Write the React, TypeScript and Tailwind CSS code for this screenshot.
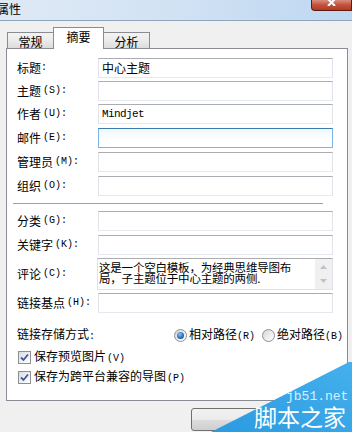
import React from "react"

const cjk = "font-['Noto_Sans_CJK_SC','Noto_Sans_CJK_JP',sans-serif]"
const mono = "font-['Liberation_Mono','DejaVu_Sans_Mono',monospace] text-[10px]"

type Field = {
  label: string
  hotkey?: string
  value?: string
  mono?: boolean
  focused?: boolean
  mt: string
}

const topFields: Field[] = [
  { label: "标题", value: "中心主题", mt: "mt-0" },
  { label: "主题", hotkey: "(S)", mt: "mt-[3px]" },
  { label: "作者", hotkey: "(U)", value: "Mindjet", mono: true, mt: "mt-[3px]" },
  { label: "邮件", hotkey: "(E)", focused: true, mt: "mt-[4px]" },
  { label: "管理员", hotkey: "(M)", mt: "mt-[4px]" },
  { label: "组织", hotkey: "(O)", mt: "mt-[4px]" },
]

function Label({ text, hotkey }: { text: string; hotkey?: string }) {
  return (
    <span className="flex w-[81px] shrink-0 items-center whitespace-nowrap text-[12px] leading-none text-black">
      {text}
      {hotkey && <span className={`ml-[2px] ${mono}`}>{hotkey}</span>}
      <span className={mono}>:</span>
    </span>
  )
}

function TextBox({ value, isMono, focused }: { value?: string; isMono?: boolean; focused?: boolean }) {
  const border = focused
    ? "border border-[#7eb4ea] border-t-[#3d7bad] bg-[linear-gradient(180deg,#eef7fe_0%,#ffffff_60%)]"
    : "border border-[#e2e3ea] border-t-[#abadb3] border-b-[#e3e9ef] bg-white"
  return (
    <div className={`flex h-[20px] w-[235px] items-center pl-[3px] ${border}`}>
      {value && (
        <span
          className={
            isMono
              ? "font-['Liberation_Mono',monospace] text-[11px] tracking-[-0.6px] leading-none text-black"
              : "text-[12px] leading-none text-black"
          }
        >
          {value}
        </span>
      )}
    </div>
  )
}

function Row({ f }: { f: Field }) {
  return (
    <div className={`flex items-center ${f.mt}`}>
      <Label text={f.label} hotkey={f.hotkey} />
      <TextBox value={f.value} isMono={f.mono} focused={f.focused} />
    </div>
  )
}

function Radio({ checked }: { checked?: boolean }) {
  return (
    <span className="flex h-[13px] w-[13px] shrink-0 items-center justify-center rounded-full border border-[#8e8f8f] bg-[linear-gradient(135deg,#d6d6d6_0%,#f4f4f4_70%,#ffffff_100%)]">
      {checked && (
        <span className="h-[7px] w-[7px] rounded-full bg-[radial-gradient(circle_at_40%_35%,#8ec3f0_0%,#2a6fbf_55%,#173f86_100%)]" />
      )}
    </span>
  )
}

function Checkbox() {
  return (
    <span className="flex h-[13px] w-[13px] shrink-0 items-center justify-center border border-[#8e8f8f] bg-[linear-gradient(135deg,#d9dde2_0%,#f3f5f7_70%,#ffffff_100%)]">
      <svg width="9" height="9" viewBox="0 0 9 9">
        <path d="M1 4.5 L3.5 7 L8 1.5" fill="none" stroke="#3b5b9e" strokeWidth="1.8" />
      </svg>
    </span>
  )
}

export default function App() {
  return (
    <div className={`relative h-[432px] w-[352px] overflow-hidden bg-[#f0f0f0] ${cjk}`}>
      {/* title bar */}
      <div className="relative h-[21px] border-b border-[#8ea4bb] bg-[linear-gradient(90deg,#dfe9f5_0%,#d3e3f4_45%,#bdd7f1_100%)]">
        <span className="absolute left-[-3px] top-[3px] text-[12px] leading-none text-black">属性</span>
        <div className="absolute right-0 top-0 flex h-[11px] w-[41px] items-start justify-center rounded-bl-[4px] border border-t-0 border-[#5d1a12] bg-[linear-gradient(180deg,#d98d7f_0%,#c4503c_50%,#b23a22_100%)]">
          <svg width="9" height="7" viewBox="0 0 9 7" className="mt-[-1px]">
            <path d="M1 0 L8 7 M8 0 L1 7" stroke="#ffffff" strokeWidth="2" />
          </svg>
        </div>
      </div>

      <div className="px-[6px]">
        {/* tabs */}
        <div className="flex h-[27px] items-end pl-[1px] text-[12px] leading-none text-black">
          <div className="flex h-[16px] w-[47px] items-center justify-center border border-b-0 border-[#898c95] bg-[linear-gradient(180deg,#f3f3f3_0%,#ebebeb_50%,#dcdcdc_100%)] pt-[2px]">
            常规
          </div>
          <div className="relative z-10 -mb-px -ml-px flex h-[22px] w-[51px] items-start justify-center border border-b-0 border-[#898c95] bg-white pt-[3px]">
            摘要
          </div>
          <div className="-ml-px flex h-[16px] w-[47px] items-center justify-center border border-b-0 border-[#898c95] bg-[linear-gradient(180deg,#f3f3f3_0%,#ebebeb_50%,#dcdcdc_100%)] pt-[2px]">
            分析
          </div>
        </div>

        {/* panel */}
        <div className="flex h-[353px] w-[342px] flex-col border border-[#898c95] bg-white pl-[10px] pt-[9px]">
          {topFields.map((f) => (
            <Row key={f.label} f={f} />
          ))}

          <div className="-ml-[4px] mt-[7px] h-[2px] w-[310px] border-t border-[#a0a0a0] border-b-white" />

          <Row f={{ label: "分类", hotkey: "(G)", mt: "mt-[6px]" }} />
          <Row f={{ label: "关键字", hotkey: "(K)", mt: "mt-[4px]" }} />

          <div className="mt-[3px] flex items-center">
            <Label text="评论" hotkey="(C)" />
            <div className="-ml-px flex h-[32px] w-[236px] border border-[#e2e3ea] border-t-[#abadb3] bg-white">
              <p className="flex-1 whitespace-nowrap pl-[1px] pt-[3px] text-[11.5px] leading-[11px] tracking-[-0.2px] text-black">
                这是一个空白模板，为经典思维导图布
                <br />
                局，子主题位于中心主题的两侧.
              </p>
              <div className="flex w-[17px] shrink-0 flex-col items-center justify-between bg-[#f0f0f0] py-[6px]">
                <svg width="7" height="4" viewBox="0 0 7 4">
                  <path d="M0 4 L3.5 0 L7 4 Z" fill="#c2c2c2" />
                </svg>
                <svg width="7" height="4" viewBox="0 0 7 4">
                  <path d="M0 0 L3.5 4 L7 0 Z" fill="#c2c2c2" />
                </svg>
              </div>
            </div>
          </div>

          <Row f={{ label: "链接基点", hotkey: "(H)", mt: "mt-[3px]" }} />

          <div className="mt-[15px] flex items-center whitespace-nowrap text-[12px] leading-none text-black">
            <span className="w-[157px] shrink-0">
              链接存储方式<span className={mono}>:</span>
            </span>
            <Radio checked />
            <span className="ml-[2px] shrink-0">
              相对路径<span className={mono}>(R)</span>
            </span>
            <span className="ml-[7px] shrink-0">
              <Radio />
            </span>
            <span className="ml-[2px] shrink-0">
              绝对路径<span className={mono}>(B)</span>
            </span>
          </div>

          <div className="ml-[1px] mt-[8px] flex items-center whitespace-nowrap text-[12px] leading-none text-black">
            <Checkbox />
            <span className="ml-[3px]">
              保存预览图片<span className={`ml-[1px] ${mono}`}>(V)</span>
            </span>
          </div>
          <div className="ml-[1px] mt-[6px] flex items-center whitespace-nowrap text-[12px] leading-none text-black">
            <Checkbox />
            <span className="ml-[3px]">
              保存为跨平台兼容的导图<span className={`ml-[1px] ${mono}`}>(P)</span>
            </span>
          </div>
        </div>

        <div className="ml-[185px] mt-[7px] h-[23px] w-[75px] rounded-[3px] border border-[#707070] bg-[linear-gradient(180deg,#f2f2f2_0%,#ebebeb_50%,#dddddd_51%,#cfcfcf_100%)]" />
      </div>

      {/* watermark */}
      <svg className="absolute bottom-0 right-0" width="141" height="70" viewBox="0 0 141 70">
        <defs>
          <linearGradient id="wm" x1="0" y1="1" x2="1" y2="0">
            <stop offset="0" stopColor="#2b9ae0" />
            <stop offset="1" stopColor="#45b0ec" />
          </linearGradient>
        </defs>
        <polygon points="0,70 138,0 141,0 141,70" fill="url(#wm)" />
      </svg>
      <span className="absolute left-[286px] top-[390px] font-['Liberation_Mono',monospace] text-[13px] leading-none text-[#d8efff]">
        jb51.net
      </span>
      <span className="absolute left-[254px] top-[405px] text-[23px] leading-none text-white">脚本之家</span>
    </div>
  )
}
